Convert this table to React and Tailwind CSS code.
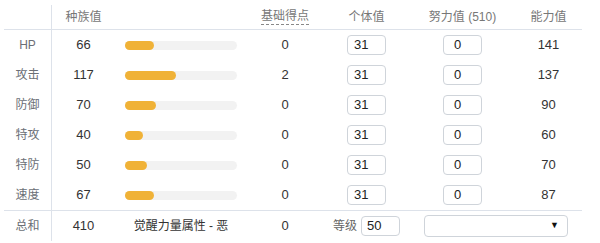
const stats = [
  { label: 'HP', base: 66, point: 0, iv: 31, ev: 0, value: 141 },
  { label: '攻击', base: 117, point: 2, iv: 31, ev: 0, value: 137 },
  { label: '防御', base: 70, point: 0, iv: 31, ev: 0, value: 90 },
  { label: '特攻', base: 40, point: 0, iv: 31, ev: 0, value: 60 },
  { label: '特防', base: 50, point: 0, iv: 31, ev: 0, value: 70 },
  { label: '速度', base: 67, point: 0, iv: 31, ev: 0, value: 87 },
];

const row = 'grid grid-cols-[48px_63px_132px_76px_87px_105px_67px] items-center';
const labelCell = 'h-full flex items-center justify-center border-r border-[#dde2ea] text-[#6b6f76]';

function Bar({ base }) {
  return (
    <div className="pl-[10px]">
      <div className="h-[9px] w-[112px] rounded-full bg-[#f2f2f2]">
        <div className="h-full rounded-full bg-[#f0b237]" style={{ width: `${(base / 255) * 112}px` }} />
      </div>
    </div>
  );
}

function Box({ value, pad }) {
  return (
    <div className={`h-[20px] w-[39px] rounded-[4px] border border-[#cfd4da] bg-white flex items-center ${pad} text-[#222]`}>
      {value}
    </div>
  );
}

export default function App() {
  return (
    <div
      className="w-[600px] h-[243px] bg-white pt-[5px] pl-[4px] text-[13px] text-[#333]"
      style={{ fontFamily: '"Liberation Sans", Arial, "Noto Sans CJK SC", sans-serif' }}
    >
      <div className={`${row} h-[25px] w-[578px] border-b border-[#dde2ea] text-[#777]`}>
        <div className={labelCell} />
        <div className="text-center text-[12px]">种族值</div>
        <div />
        <div className="flex justify-center">
          <span className="text-[12px] border-b border-dashed border-[#888] leading-[15px]">基础得点</span>
        </div>
        <div className="text-center text-[12px]">个体值</div>
        <div className="text-center text-[12px]">努力值 (510)</div>
        <div className="text-center text-[12px]">能力值</div>
      </div>

      {stats.map((s) => (
        <div key={s.label} className={`${row} h-[30px] w-[578px]`}>
          <div className={`${labelCell} text-[12px]`}>{s.label}</div>
          <div className="text-center">{s.base}</div>
          <Bar base={s.base} />
          <div className="text-center">{s.point}</div>
          <div className="flex justify-center">
            <Box value={s.iv} pad="pl-[6px]" />
          </div>
          <div className="flex justify-center">
            <Box value={s.ev} pad="pl-[10px]" />
          </div>
          <div className="text-center">{s.value}</div>
        </div>
      ))}

      <div className={`${row} h-[31px] w-[578px] border-t border-[#dde2ea]`}>
        <div className={`${labelCell} text-[12px]`}>总和</div>
        <div className="text-center">410</div>
        <div className="text-center text-[12px]">觉醒力量属性 - 恶</div>
        <div className="text-center">0</div>
        <div className="flex items-center justify-center gap-[4px]">
          <span className="text-[12px] text-[#666]">等级</span>
          <Box value={50} pad="pl-[5px]" />
        </div>
        <div className="col-span-2 flex justify-center">
          <div className="h-[22px] w-[144px] rounded-[4px] border border-[#cfd4da] bg-white flex items-center justify-end pr-[8px] text-[9px] text-[#111]">
            ▼
          </div>
        </div>
      </div>
    </div>
  );
}
